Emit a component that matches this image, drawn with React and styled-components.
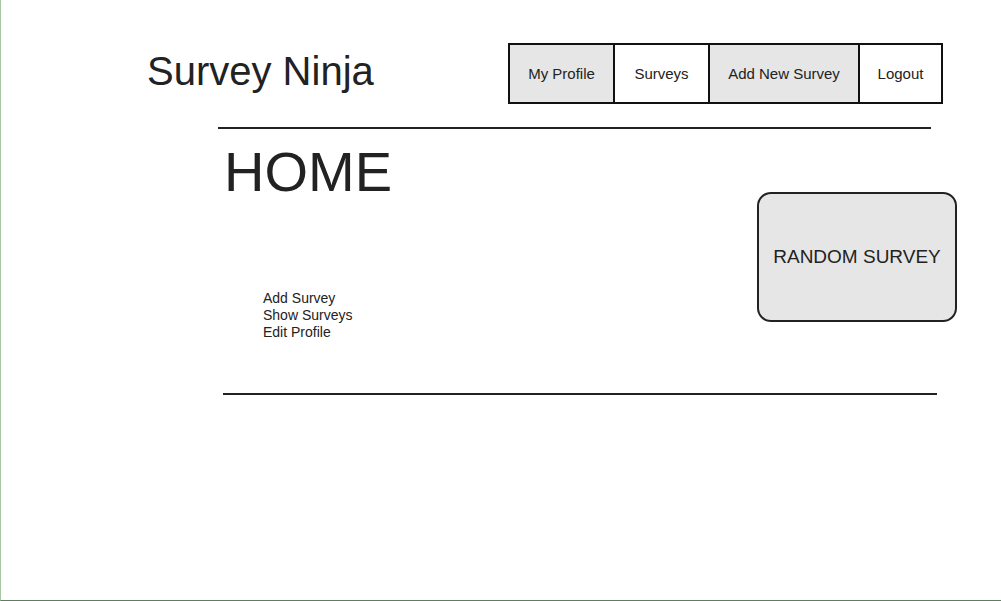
import React from 'react'
import styled, { createGlobalStyle } from 'styled-components'

const GlobalStyle = createGlobalStyle`
  html, body {
    margin: 0;
    padding: 0;
    background: #ffffff;
  }
  body {
    font-family: "Liberation Sans", Arial, sans-serif;
    color: #222222;
  }
`

const navItems = [
  { label: 'My Profile', shaded: true, width: 103 },
  { label: 'Surveys', shaded: false, width: 95 },
  { label: 'Add New Survey', shaded: true, width: 150 },
  { label: 'Logout', shaded: false, width: 83 },
]

const links = ['Add Survey', 'Show Surveys', 'Edit Profile']

export default function App() {
  return (
    <React.Fragment>
      <GlobalStyle />
      <Page>
        <Header>
          <Title>Survey Ninja</Title>
          <Nav>
            {navItems.map(item => (
              <NavItem key={item.label} $shaded={item.shaded} $width={item.width}>
                {item.label}
              </NavItem>
            ))}
          </Nav>
        </Header>

        <Main>
          <Rule $inset={0} $width={713} />
          <Content>
            <LeftColumn>
              <Heading>HOME</Heading>
              <LinkList>
                {links.map(link => (
                  <LinkItem key={link}>{link}</LinkItem>
                ))}
              </LinkList>
            </LeftColumn>
            <RandomButton>RANDOM SURVEY</RandomButton>
          </Content>
          <Rule $inset={5} $width={714} />
        </Main>
      </Page>
    </React.Fragment>
  )
}

const Page = styled.div`
  width: 1001px;
  height: 601px;
  box-sizing: border-box;
  border-left: 1px solid #a3c8a3;
  border-bottom: 1px solid #5f7d5f;
  overflow: hidden;
`

const Header = styled.header`
  display: flex;
  align-items: center;
  padding: 43px 58px 0 146px;
`

const Title = styled.h1`
  margin: 0 0 6px 0;
  font-size: 40px;
  font-weight: 400;
  line-height: 46px;
  color: #222222;
`

const Nav = styled.nav`
  display: flex;
  margin-left: auto;
  height: 61px;
  box-sizing: border-box;
  border: 2px solid #111111;
`

const NavItem = styled.div`
  display: flex;
  align-items: center;
  justify-content: center;
  box-sizing: border-box;
  width: ${p => p.$width}px;
  font-size: 15px;
  white-space: nowrap;
  color: #222222;
  background: ${p => (p.$shaded ? '#e6e6e6' : '#ffffff')};

  & + & {
    border-left: 2px solid #111111;
  }
`

const Main = styled.main`
  margin-left: 217px;
  padding-top: 23px;
`

const Rule = styled.div`
  height: 2px;
  background: #222222;
  margin-left: ${p => p.$inset}px;
  width: ${p => p.$width}px;
`

const Content = styled.section`
  display: flex;
  justify-content: space-between;
  align-items: flex-start;
  width: 739px;
  height: 264px;
`

const LeftColumn = styled.div`
  display: flex;
  flex-direction: column;
`

const Heading = styled.h2`
  margin: 11px 0 0 6px;
  font-size: 56px;
  font-weight: 400;
  line-height: 64px;
  color: #222222;
`

const LinkList = styled.ul`
  list-style: none;
  margin: 86px 0 0 45px;
  padding: 0;
`

const LinkItem = styled.li`
  font-size: 14px;
  line-height: 17px;
  color: #222222;
`

const RandomButton = styled.div`
  margin-top: 63px;
  width: 200px;
  height: 130px;
  box-sizing: border-box;
  border: 2px solid #222222;
  border-radius: 14px;
  background: #e6e6e6;
  display: flex;
  align-items: center;
  justify-content: center;
  font-size: 19px;
  color: #222222;
`
